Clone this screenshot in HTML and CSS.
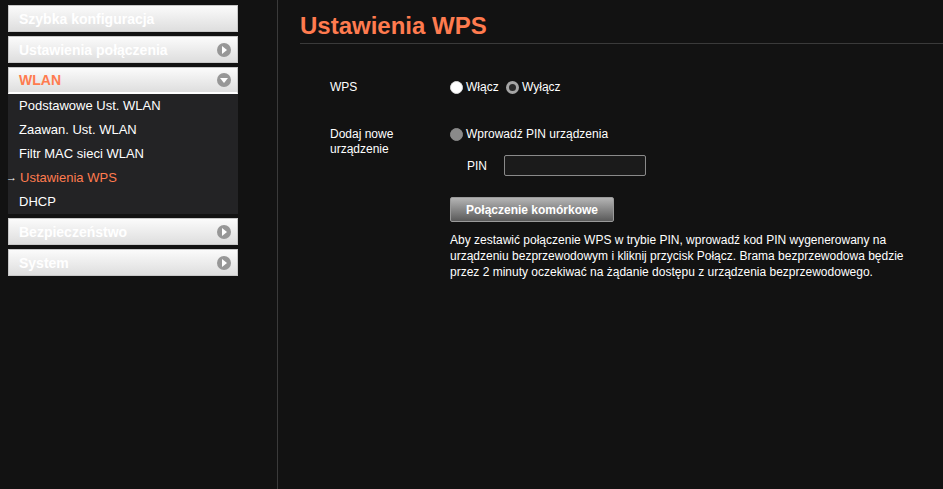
FILE: index.html
```html
<!DOCTYPE html>
<html>
<head>
    <meta charset="utf-8">
    <title>Ustawienia WPS</title>
    <link rel="stylesheet" href="styles.css">
</head>
<body>
    <div class="page">
        <div class="sidebar">
            <div class="menu-item">Szybka konfiguracja</div>
            <div class="menu-item">Ustawienia połączenia<span class="menu-icon right"></span></div>
            <div class="menu-item open">WLAN<span class="menu-icon down"></span></div>
            <div class="submenu">
                <div class="submenu-item">Podstawowe Ust. WLAN</div>
                <div class="submenu-item">Zaawan. Ust. WLAN</div>
                <div class="submenu-item">Filtr MAC sieci WLAN</div>
                <div class="submenu-item active"><span class="arrow">&rarr;</span>Ustawienia WPS</div>
                <div class="submenu-item">DHCP</div>
            </div>
            <div class="menu-item">Bezpieczeństwo<span class="menu-icon right"></span></div>
            <div class="menu-item">System<span class="menu-icon right"></span></div>
        </div>

        <div class="content">
            <h1 class="title">Ustawienia WPS</h1>

            <div class="form">
                <div class="row wps-row">
                    <div class="label">WPS</div>
                    <div class="value">
                        <label class="radio"><span class="dot"></span>Włącz</label>
                        <label class="radio"><span class="dot checked"></span>Wyłącz</label>
                    </div>
                </div>

                <div class="row">
                    <div class="label">Dodaj nowe<br>urządzenie</div>
                    <div class="value">
                        <label class="radio"><span class="dot disabled"></span>Wprowadź PIN urządzenia</label>
                        <div class="pin-row">
                            <span class="pin-label">PIN</span>
                            <input type="text" class="pin-input">
                        </div>
                        <button class="btn">Połączenie komórkowe</button>
                        <p class="note">Aby zestawić połączenie WPS w trybie PIN, wprowadź kod PIN wygenerowany na urządzeniu bezprzewodowym i kliknij przycisk Połącz. Brama bezprzewodowa będzie przez 2 minuty oczekiwać na żądanie dostępu z urządzenia bezprzewodowego.</p>
                    </div>
                </div>
            </div>
        </div>
    </div>
</body>
</html>
```

FILE: styles.css
```css
body {
    margin: 0;
    padding: 0;
    background-color: #121212;
    font-family: "Liberation Sans", Arial, sans-serif;
    color: #fff;
}

.page {
    display: flex;
    height: 100vh;
}

/* left navigation */
.sidebar {
    width: 269px;
    padding: 5px 0 0 8px;
    border-right: 1px solid #3a3a3a;
    box-sizing: content-box;
}

.menu-item {
    display: flex;
    align-items: center;
    justify-content: space-between;
    width: 230px;
    height: 27px;
    box-sizing: border-box;
    margin-bottom: 4px;
    padding: 0 10px 0 10px;
    border: 1px solid #c8c8c8;
    background: linear-gradient(#fbfbfb, #dedede);
    color: #fff;
    font-size: 14px;
    font-weight: bold;
}

.menu-item.open {
    color: #ff7b4f;
    margin-bottom: 0;
    border-bottom: 2px solid #fff;
}

.menu-icon {
    position: relative;
    width: 14px;
    height: 14px;
    margin-right: -4px;
    border-radius: 50%;
    background-color: #979797;
}

.menu-icon.right::after {
    content: "";
    position: absolute;
    left: 5px;
    top: 3px;
    border-left: 5px solid #fff;
    border-top: 4px solid transparent;
    border-bottom: 4px solid transparent;
}

.menu-icon.down::after {
    content: "";
    position: absolute;
    left: 3px;
    top: 5px;
    border-top: 5px solid #fff;
    border-left: 4px solid transparent;
    border-right: 4px solid transparent;
}

.submenu {
    width: 230px;
    background-color: #232325;
    margin-bottom: 4px;
}

.submenu-item {
    position: relative;
    height: 24px;
    line-height: 23px;
    padding-left: 11px;
    font-size: 13px;
}

.submenu-item.active {
    color: #ff7b4f;
    padding-left: 12px;
}

.submenu-item .arrow {
    position: absolute;
    left: -2px;
    top: 0;
    color: #fff;
    font-size: 11px;
}

/* main area */
.content {
    flex: 1;
    padding: 0 0 0 22px;
}

.title {
    margin: 0;
    padding: 12px 0 3px;
    border-bottom: 1px solid #3a3a3a;
    color: #ff7b4f;
    font-size: 24px;
    font-weight: bold;
}

.form {
    padding-left: 30px;
    font-size: 12px;
}

.row {
    display: flex;
}

.wps-row {
    margin-top: 36px;
    margin-bottom: 30px;
}

.label {
    width: 120px;
    line-height: 15px;
}

.value {
    flex: 1;
}

.radio {
    display: inline-flex;
    align-items: center;
    margin-right: 4px;
    line-height: 15px;
}

.dot {
    width: 11px;
    height: 11px;
    margin-right: 3px;
    border-radius: 50%;
    background-color: #fff;
    border: 1px solid #ddd;
}

.dot.checked {
    width: 7px;
    height: 7px;
    border: 3px solid #a5a5a5;
    background-color: #2a2a2a;
}

.dot.disabled {
    background-color: #8a8a8a;
    border-color: #8a8a8a;
}

.pin-row {
    display: flex;
    align-items: center;
    margin-top: 11px;
}

.pin-label {
    width: 37px;
    padding-left: 17px;
}

.pin-input {
    width: 142px;
    height: 21px;
    box-sizing: border-box;
    border: 1px solid #8a8a8a;
    border-radius: 2px;
    background-color: #1b1b1b;
    color: #fff;
}

.btn {
    display: block;
    width: 164px;
    height: 25px;
    margin-top: 21px;
    border: 1px solid #9a9a9a;
    border-radius: 2px;
    background: linear-gradient(#b4b4b4, #5a5a5a);
    color: #fff;
    font-family: "Liberation Sans", Arial, sans-serif;
    font-size: 12px;
    font-weight: bold;
}

.note {
    width: 470px;
    margin: 10px 0 0;
    line-height: 16px;
}
```
